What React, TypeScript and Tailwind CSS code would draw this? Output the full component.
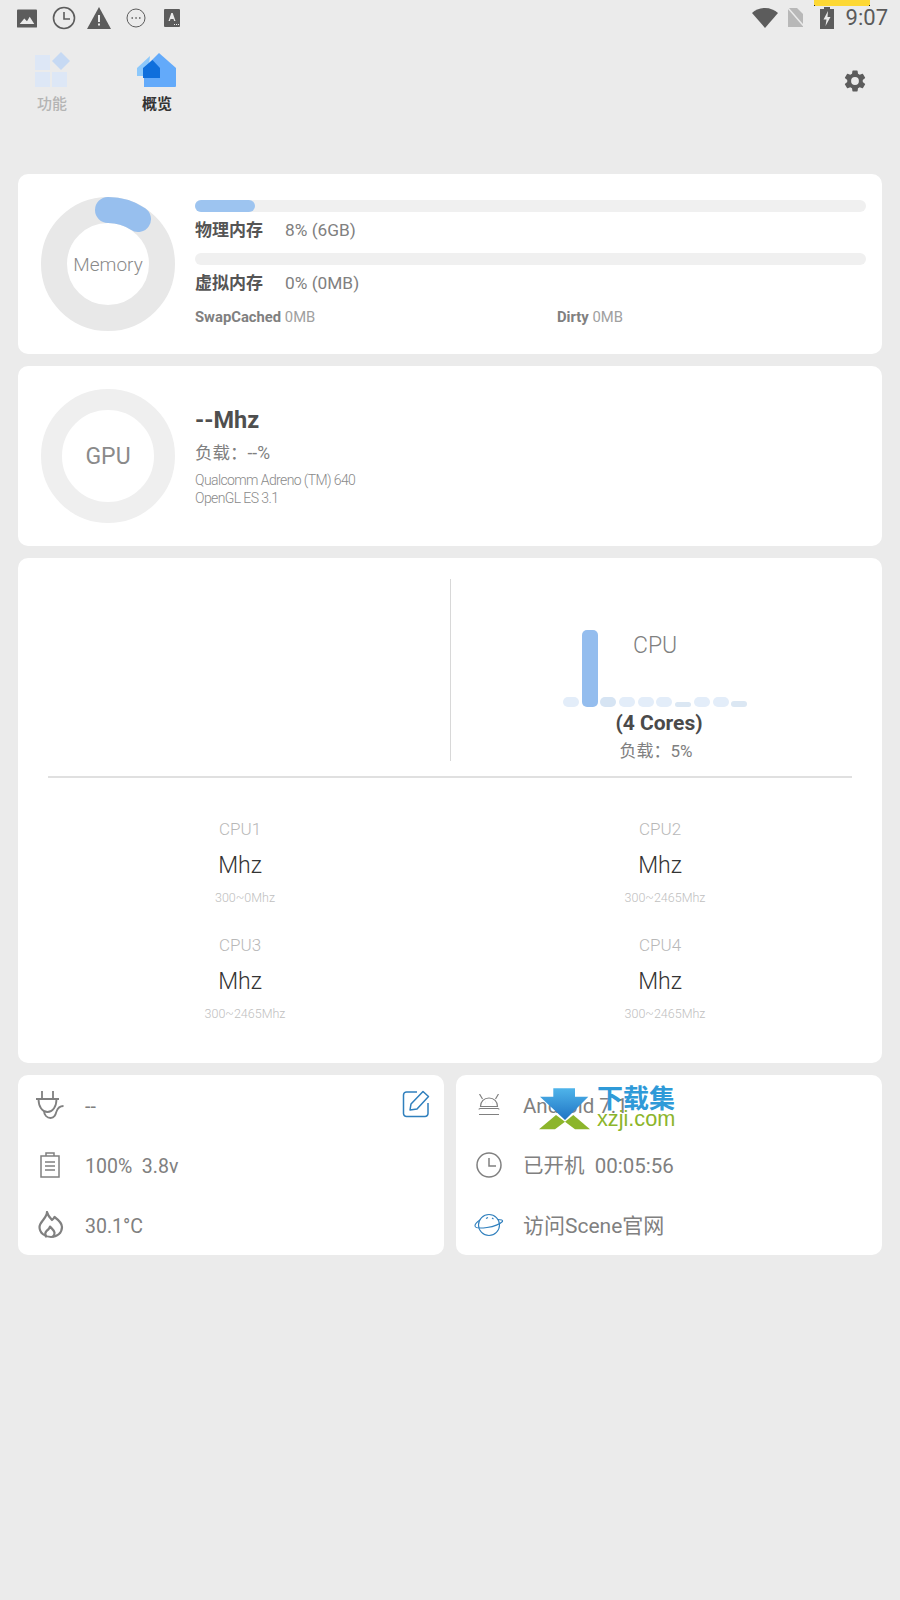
import React from "react";

const bars = [
  ["h-[10px]", "bg-[#e3edf9]"],
  ["h-[77px]", "bg-[#94bdee]"],
  ["h-[10px]", "bg-[#d6e4f3]"],
  ["h-[10px]", "bg-[#e3edf9]"],
  ["h-[10px]", "bg-[#e3edf9]"],
  ["h-[10px]", "bg-[#e3edf9]"],
  ["h-[5px]", "bg-[#dbe7f3]"],
  ["h-[10px]", "bg-[#e3edf9]"],
  ["h-[10px]", "bg-[#e3edf9]"],
  ["h-[6px]", "bg-[#dbe7f3]"],
];

function Donut({ label, color, r, w, size, arc }: { label: string; color: string; r: number; w: number; size: string; arc?: boolean }) {
  return (
    <div className="relative w-[134px] h-[134px] shrink-0">
      <svg width="134" height="134" viewBox="0 0 134 134">
        <circle cx="67" cy="67" r={r} fill="none" stroke={color} strokeWidth={w} />
        {arc && (
          <path d="M 67 13 A 54 54 0 0 1 97 22" fill="none" stroke="#97bfee" strokeWidth="26" strokeLinecap="round" />
        )}
      </svg>
      <div className={`absolute inset-0 pt-[2px] flex items-center justify-center text-[#8a8a8a] ${size}`}>{label}</div>
    </div>
  );
}

function Cpu({ name, range }: { name: string; range: string }) {
  return (
    <div className="flex flex-col items-center h-[116px]">
      <div className="text-[17px] leading-[20px] text-[#b8b8b8] mt-[1px] pr-[10px] font-light">{name}</div>
      <div className="text-[23px] leading-[32px] text-[#333333] mt-[11px] font-light pr-[10px]">Mhz</div>
      <div className="text-[12.500px] leading-[16px] text-[#c0c0c0] mt-[8px] font-light">{range}</div>
    </div>
  );
}

function Row({ icon, children, size }: { icon: React.ReactNode; children: React.ReactNode; size: string }) {
  return (
    <div className="flex items-center h-[60px]">
      <div className="w-[34px] h-[30px] flex items-center justify-center ml-[16px] shrink-0">{icon}</div>
      <div className={`ml-[17px] pt-[3px] text-[#808080] whitespace-pre ${size}`}>{children}</div>
    </div>
  );
}

const Plug = () => (
  <svg width="29" height="28" viewBox="0 0 29 28" fill="none" stroke="#808080" strokeWidth="1.800" className="mr-[2px]">
    <path d="M6 0v8M17 0v8M0 8h23M2.500 8c0 8 4 13 9 13s9-5 9-13" />
    <path d="M8 20c0 4 3 7 6.500 7 4 0 5-3 6-6.500 1-3 3-5.500 7-5.500" />
  </svg>
);
const Battery = () => (
  <svg width="20" height="26" viewBox="0 0 20 26" fill="none" stroke="#808080" strokeWidth="1.500" className="mr-[2px]">
    <rect x="1" y="4" width="18" height="21" />
    <path d="M6 4V1h8v3M5 10h10M5 14h10M5 18h10" />
  </svg>
);
const Flame = () => (
  <svg width="26" height="28" viewBox="0 0 26 28" fill="none" stroke="#808080" strokeWidth="2.200" strokeLinejoin="round" strokeLinecap="round">
    <path d="M9 1c1 4 3 6 5 8 1-.8 2-2 2.500-3 4 3 7.500 6 7.500 10 0 6-5 10-11 10S1.500 22 1.500 16c0-3 2-5 4-7.500C7.500 6 9 4 9 1z" />
    <path d="M8 25.500c-1-2-1-4 .5-5.500 1.500-1 3-2.500 3.500-4.500 1.500 2 4 3.500 4.500 6 .3 1.500-.5 3-1.500 4" />
  </svg>
);
const Android = () => (
  <svg width="22" height="22" viewBox="0 0 22 22" fill="none" stroke="#808080" strokeWidth="1.200">
    <path d="M1.500 0l3 5M20.500 0l-3 5M2.500 12.500C2.500 7.500 6 4 11 4s8.500 3.500 8.500 8.500z" />
    <path d="M1 15.500c0 0 0-1 1-1h18c1 0 1 1 1 1M1 20.500h20" />
    <path d="M7.500 8.500h.1M14.500 8.500h.1" strokeWidth="2" />
  </svg>
);
const Clock = () => (
  <svg width="26" height="26" viewBox="0 0 26 26" fill="none" stroke="#808080" strokeWidth="1.500">
    <circle cx="13" cy="13" r="12" />
    <path d="M13 6v8h7" />
  </svg>
);
const Planet = () => (
  <svg width="30" height="24" viewBox="0 0 30 24" fill="none" stroke="#2f7fbd" strokeWidth="1.100">
    <circle cx="15" cy="12" r="10.500" />
    <path d="M6 7C3 9 .8 11 1 13c.3 2 5 2.500 12 1.500S26 11 28.500 8.500c.6-1.500-1-2-4.500-2" />
    <path d="M12 5.500l2-1M18 5l1.500 1" />
  </svg>
);

export default function App() {
  return (
    <div
      className="relative w-[900px] h-[1600px] overflow-hidden bg-[#ebebeb] flex flex-col"
      style={{ fontFamily: 'Roboto, "Noto Sans CJK SC", sans-serif' }}
    >
      {/* status bar */}
      <div className="h-[36px] flex items-center shrink-0 relative">
        <svg width="20" height="19" viewBox="0 0 22 20" className="ml-[17px]" fill="#5c5c5c">
          <path d="M1 0h20a1 1 0 0 1 1 1v18a1 1 0 0 1-1 1H1a1 1 0 0 1-1-1V1a1 1 0 0 1 1-1z" />
          <path d="M3 16l5-6 3 3 3-5 5 8z" fill="#ebebeb" />
        </svg>
        <svg width="24" height="24" viewBox="0 0 24 24" className="ml-[15px]" fill="none" stroke="#5c5c5c" strokeWidth="1.600">
          <circle cx="12" cy="12" r="10.500" />
          <path d="M12 6v7h6" />
        </svg>
        <svg width="24" height="22" viewBox="0 0 24 22" className="ml-[11px]" fill="#5c5c5c">
          <path d="M12 0l12 22H0z" />
          <path d="M11 8h2v7h-2zM11 16.500h2v2h-2z" fill="#ebebeb" />
        </svg>
        <svg width="20" height="20" viewBox="0 0 20 20" className="ml-[15px]" fill="none" stroke="#5c5c5c" strokeWidth="1">
          <circle cx="10" cy="10" r="9" />
          <path d="M5.500 10h1.500M9.300 10h1.500M13 10h1.500" strokeWidth="1.400" />
        </svg>
        <svg width="16" height="18" viewBox="0 0 16 18" className="ml-[18px]" fill="#5c5c5c">
          <rect width="16" height="18" rx="1" />
          <path d="M4.500 12L7.300 4h1.400l2.800 8h-1.400l-.6-2H6.500l-.6 2z" fill="#ebebeb" />
          <path d="M10 15h1v1h-1zM12 15h1v1h-1zM14 15h1v1h-1z" fill="#ebebeb" />
        </svg>
        <div className="flex-1" />
        <svg width="26" height="20" viewBox="0 0 26 20" fill="#5c5c5c">
          <path d="M0 5C3 2 8 0 13 0s10 2 13 5L13 20z" />
        </svg>
        <svg width="22" height="20" viewBox="0 0 20 20" className="ml-[7px]">
          <path d="M2 0h9l6 6v13H2z" fill="#b8b8b8" />
          <path d="M2 0l17 19.500" stroke="#ebebeb" strokeWidth="1.500" />
        </svg>
        <svg width="14" height="22" viewBox="0 0 14 22" className="ml-[13px]" fill="#5c5c5c">
          <path d="M4 0h6v2h4v20H0V2h4z" />
          <path d="M8 4L3.500 12.500h3L5.500 19 10.500 10h-3z" fill="#ebebeb" />
        </svg>
        <div className="ml-[12px] mr-[12px] text-[22px] text-[#5a5a5a] leading-none">9:07</div>
        <div className="absolute top-0 left-[814px] w-[56px] h-[6px] bg-[#fdd835]" />
        <div className="absolute top-[5px] left-[814px] w-[1px] h-[1px] bg-[#222222]" />
        <div className="absolute top-[5px] left-[869px] w-[1px] h-[1px] bg-[#222222]" />
      </div>

      {/* header */}
      <div className="h-[138px] shrink-0 flex items-start relative">
        <div className="ml-[36px] mt-[16px] flex flex-col items-center w-[34px]">
          <svg width="36" height="36" viewBox="0 0 36 36" className="shrink-0">
            <rect x="0" y="3" width="15" height="15" fill="#dde7f6" />
            <rect x="0" y="20" width="15" height="15" fill="#dde7f6" />
            <rect x="17" y="20" width="15" height="15" fill="#dde7f6" />
            <path d="M26 0l9 9-9 9-9-9z" fill="#c6d9f3" />
          </svg>
          <div className="text-[15px] leading-[20px] mt-[6px] pr-[2px] text-[#b4b4b4] font-medium whitespace-nowrap">功能</div>
        </div>
        <div className="ml-[67px] mt-[17px] flex flex-col items-center w-[40px]">
          <svg width="42" height="34" viewBox="0 0 42 34" className="shrink-0">
            <path d="M14 3L1 15v8h12V12z" fill="#8cc8fb" />
            <path d="M23 0L40 15v18a1 1 0 0 1-1 1H8V15z" fill="#63aafa" />
            <path d="M17 7L8 15v10h25V15z" fill="#63aafa" />
            <path d="M16.500 7L7 15v10h17V15z" fill="#0f6fdc" />
          </svg>
          <div className="text-[15px] leading-[20px] mt-[7px] text-[#333333] font-bold whitespace-nowrap">概览</div>
        </div>
        <svg width="26" height="26" viewBox="0 0 24 24" fill="#5c5c5c" className="absolute left-[842px] top-[32px]">
          <path d="M19.140 12.940c.04-.3.060-.61.060-.94 0-.32-.020-.64-.070-.94l2.030-1.580a.49.49 0 0 0 .12-.61l-1.920-3.320a.49.49 0 0 0-.59-.22l-2.390.96c-.5-.38-1.030-.7-1.620-.94l-.36-2.540a.48.48 0 0 0-.48-.41h-3.840a.48.48 0 0 0-.47.41l-.36 2.540c-.59.24-1.130.57-1.620.94l-2.390-.96a.49.49 0 0 0-.59.22L2.740 8.870a.48.48 0 0 0 .12.61l2.030 1.580c-.05.3-.09.63-.09.94s.020.64.070.94l-2.030 1.580a.49.49 0 0 0-.12.61l1.920 3.320c.12.22.37.29.59.22l2.390-.96c.5.38 1.030.7 1.620.94l.36 2.540c.05.24.24.41.48.41h3.840c.24 0 .44-.17.47-.41l.36-2.540c.59-.24 1.130-.56 1.620-.94l2.390.96c.22.08.47 0 .59-.22l1.920-3.320a.48.48 0 0 0-.12-.61l-2.010-1.580zM12 15.600a3.600 3.600 0 1 1 0-7.200 3.600 3.600 0 0 1 0 7.200z" />
        </svg>
      </div>

      <div className="px-[18px] flex flex-col gap-[12px]">
        {/* memory */}
        <div className="bg-white rounded-[10px] h-[180px] flex pl-[23px] pr-[16px] pt-[23px]">
          <Donut label="Memory" color="#e8e8e8" r={54} w={26} size="text-[19px] font-light" arc />
          <div className="ml-[20px] flex-1 pt-[3px]">
            <div className="h-[12px] rounded-full bg-[#f0f0f0]">
              <div className="h-[12px] w-[60px] rounded-full bg-[#9dc4f0]" />
            </div>
            <div className="flex items-center h-[29px] mt-[4px] text-[#555555]">
              <span className="text-[17px] font-bold w-[90px]">物理内存</span>
              <span className="text-[17.300px] text-[#808080]">8% (6GB)</span>
            </div>
            <div className="h-[12px] rounded-full bg-[#f0f0f0] mt-[8px]" />
            <div className="flex items-center h-[30px] mt-[4px] text-[#555555]">
              <span className="text-[17px] font-bold w-[90px]">虚拟内存</span>
              <span className="text-[17.300px] text-[#808080]">0% (0MB)</span>
            </div>
            <div className="flex mt-[8px] text-[14.800px] leading-[20px] text-[#a0a0a0]">
              <div className="w-[362px]"><span className="font-bold text-[#808080]">SwapCached</span> 0MB</div>
              <div><span className="font-bold text-[#808080]">Dirty</span> 0MB</div>
            </div>
          </div>
        </div>

        {/* gpu */}
        <div className="bg-white rounded-[10px] h-[180px] flex pl-[23px] pr-[16px] pt-[23px]">
          <Donut label="GPU" color="#efefef" r={56.5} w={21} size="text-[23px] font-normal" />
          <div className="ml-[20px] flex-1">
            <div className="text-[23.500px] leading-[28px] font-bold text-[#4f4f4f] mt-[17px]">--Mhz</div>
            <div className="text-[17.500px] leading-[22px] text-[#808080] mt-[8px]">负载：--%</div>
            <div className="text-[14px] leading-[18px] tracking-[-0.600px] text-[#8a8a8a] mt-[7px] font-light">Qualcomm Adreno (TM) 640</div>
            <div className="text-[14px] leading-[18px] tracking-[-0.600px] text-[#8a8a8a] font-light">OpenGL ES 3.1</div>
          </div>
        </div>

        {/* cpu */}
        <div className="bg-white rounded-[10px] h-[505px] px-[30px] pt-[21px]">
          <div className="h-[182px] flex">
            <div className="w-[403px] border-r border-[#d8d8d8]" />
            <div className="relative flex-1">
              <div className="absolute left-[112px] top-[51px] flex items-end gap-[2.700px] h-[77px]">
                {bars.map(([h, c], i) => (
                  <div key={i} className={`w-[16px] rounded-[5px] ${h} ${c}`} />
                ))}
              </div>
              <div className="absolute left-[182px] top-[54px] text-[23px] leading-[26px] text-[#808080] font-light">CPU</div>
              <div className="absolute left-[120px] top-[131px] w-[176px] text-center text-[21px] leading-[26px] font-bold text-[#4a4a4a]">(4 Cores)</div>
              <div className="absolute left-[117px] top-[161px] w-[176px] text-center text-[17px] leading-[22px] text-[#808080]">负载：5%</div>
            </div>
          </div>
          <div className="h-[2px] bg-[#e0e0e0] mt-[15px]" />
          <div className="grid grid-cols-2 mt-[40px]">
            <div className="w-[394px]"><Cpu name="CPU1" range="300~0Mhz" /></div>
            <div className="w-[410px] ml-[10px]"><Cpu name="CPU2" range="300~2465Mhz" /></div>
            <div className="w-[394px]"><Cpu name="CPU3" range="300~2465Mhz" /></div>
            <div className="w-[410px] ml-[10px]"><Cpu name="CPU4" range="300~2465Mhz" /></div>
          </div>
        </div>

        {/* bottom */}
        <div className="flex gap-[12px]">
          <div className="relative flex-1 bg-white rounded-[10px] h-[180px]">
            <Row size="text-[19.500px]" icon={<Plug />}>--</Row>
            <Row size="text-[19.500px]" icon={<Battery />}>100%  3.8v</Row>
            <Row size="text-[19.500px]" icon={<Flame />}>30.1°C</Row>
            <svg width="28" height="28" viewBox="0 0 28 28" fill="none" stroke="#2f7fbd" strokeWidth="1.500" className="absolute left-[384px] top-[15px]" strokeLinejoin="round">
              <path d="M15 2H4.500A3 3 0 0 0 1.500 5v18.500a3 3 0 0 0 3 3H23a3 3 0 0 0 3-3V13" />
              <path d="M8 20l1-6L21 1.500l5.500 5L15 19z" />
            </svg>
          </div>
          <div className="flex-1 bg-white rounded-[10px] h-[180px]">
            <Row size="text-[20.500px]" icon={<Android />}>Android 7.1</Row>
            <Row size="text-[20.500px]" icon={<Clock />}>已开机  00:05:56</Row>
            <Row size="text-[21px]" icon={<Planet />}>访问Scene官网</Row>
          </div>
        </div>
      </div>

      {/* watermark */}
      <div className="absolute left-[539px] top-[1087px] w-[140px] h-[44px]">
        <svg width="54" height="44" viewBox="0 0 54 44" className="absolute left-0 top-0">
          <defs>
            <linearGradient id="wm" x1="0" y1="0" x2="0" y2="1">
              <stop offset="0" stopColor="#4fb4ea" />
              <stop offset="1" stopColor="#1f74c4" />
            </linearGradient>
          </defs>
          <path d="M0 42.300L17 28l9 6.700-10 7.600z" fill="#8cb52b" />
          <path d="M51 42.300L34.300 28 26 34.700l10 7.600z" fill="#8cb52b" />
          <path d="M14.300 1.300H36v8.400h13.300L26 33 1 9.700h13.300z" fill="url(#wm)" />
        </svg>
        <div className="absolute left-[58px] top-[-3px] text-[26px] leading-[30px] font-bold text-[#2f9ad8] whitespace-nowrap">下载集</div>
        <div className="absolute left-[58px] top-[20px] text-[21.700px] leading-[24px] text-[#8cb52b] whitespace-nowrap" style={{ fontFamily: '"Liberation Sans", sans-serif' }}>xzji.com</div>
      </div>
    </div>
  );
}
